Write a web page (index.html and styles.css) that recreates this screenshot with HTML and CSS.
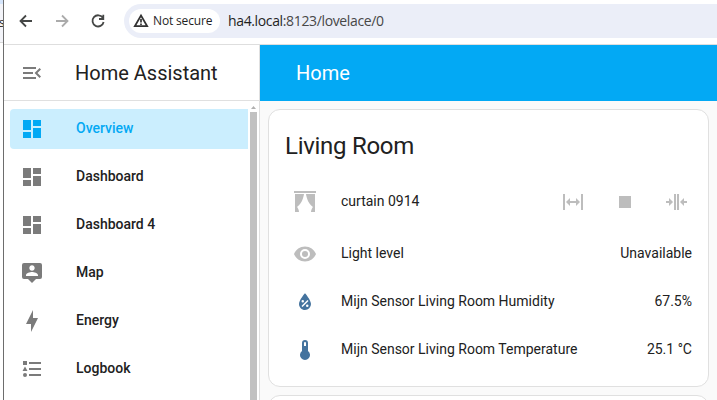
FILE: index.html
```html
<!DOCTYPE html>
<html lang="en">
<head>
<meta charset="utf-8">
<title>Home – Home Assistant</title>
<link rel="stylesheet" href="styles.css">
</head>
<body>
<div class="desktop">
  <div class="behind"><span class="behind-text">s</span></div>
  <div class="window">
    <div class="toolbar">
      <svg class="nav-icon" viewBox="0 0 16 16"><path d="M14 8H3M8 2.5L2.5 8L8 13.5"/></svg>
      <svg class="nav-icon disabled" viewBox="0 0 16 16"><path d="M2 8H13M8 2.5L13.500 8L8 13.500"/></svg>
      <svg class="nav-icon" viewBox="0 0 16 16"><path d="M12.800 4.800A5.600 5.600 0 1 0 13.600 9M13.300 1.800V6H9"/></svg>
      <div class="address">
        <div class="chip">
          <svg class="warn" viewBox="0 0 16 16"><path d="M8 2.500L14.200 13.200H1.800Z"/><path d="M8 6V9.600M8 10.600V12"/></svg>
          <span class="chip-text">Not secure</span>
        </div>
        <span class="url"><span class="host">ha4.local</span>:8123/lovelace/0</span>
      </div>
    </div>
    <div class="app">
      <aside class="sidebar">
        <div class="side-head">
          <svg class="icon" viewBox="0 0 24 24"><path d="M21,15.61L19.59,17L14.58,12L19.59,7L21,8.39L17.44,12L21,15.61M3,6H16V8H3V6M3,13V11H13V13H3M3,18V16H16V18H3Z"/></svg>
          <span class="side-title">Home Assistant</span>
        </div>
        <div class="side-body">
          <nav class="menu">
            <a class="item active"><svg class="icon" viewBox="0 0 24 24"><path d="M13,3V9H21V3M13,21H21V11H13M3,21H11V15H3M3,13H11V3H3V13Z"/></svg>Overview</a>
            <a class="item"><svg class="icon" viewBox="0 0 24 24"><path d="M13,3V9H21V3M13,21H21V11H13M3,21H11V15H3M3,13H11V3H3V13Z"/></svg>Dashboard</a>
            <a class="item"><svg class="icon" viewBox="0 0 24 24"><path d="M13,3V9H21V3M13,21H21V11H13M3,21H11V15H3M3,13H11V3H3V13Z"/></svg>Dashboard 4</a>
            <a class="item"><svg class="icon" viewBox="0 0 24 24"><path d="M20,2H4A2,2 0 0,0 2,4V16A2,2 0 0,0 4,18H8L12,22L16,18H20A2,2 0 0,0 22,16V4A2,2 0 0,0 20,2M12,4.3C13.5,4.3 14.7,5.5 14.7,7C14.7,8.5 13.5,9.7 12,9.7C10.5,9.7 9.3,8.5 9.3,7C9.3,5.5 10.5,4.3 12,4.3M18,15H6V14.1C6,12.1 10,11 12,11C14,11 18,12.1 18,14.1V15Z"/></svg>Map</a>
            <a class="item"><svg class="icon" viewBox="0 0 24 24"><path d="M11 15H6L13 1V9H18L11 23V15Z"/></svg>Energy</a>
            <a class="item"><svg class="icon" viewBox="0 0 24 24"><path d="M5,9.5L7.5,14H2.5L5,9.5M3,4H7V8H3V4M5,20A2,2 0 0,0 7,18A2,2 0 0,0 5,16A2,2 0 0,0 3,18A2,2 0 0,0 5,20M9,5V7H21V5H9M9,19H21V17H9V19M9,11V13H21V11H9Z"/></svg>Logbook</a>
          </nav>
          <div class="scrollbar">
            <svg class="scroll-up" viewBox="0 0 5 3"><path d="M2.500 0L5 3H0Z"/></svg>
            <div class="thumb"></div>
          </div>
        </div>
      </aside>
      <main class="main">
        <header class="header">Home</header>
        <div class="view">
          <section class="card">
            <h1 class="card-title">Living Room</h1>
            <div class="row tall">
              <svg class="icon unavailable" viewBox="0 0 24 24"><path d="M23 3H1V1H23V3M2 22H6C6 19 4 17 4 17C10 13 11 4 11 4H2V22M22 4H13C13 4 14 13 20 17C20 17 18 19 18 22H22V4Z"/></svg>
              <span class="name">curtain 0914</span>
              <div class="controls">
                <svg class="icon unavailable" viewBox="0 0 24 24"><path d="M9,11H15V8L19,12L15,16V13H9V16L5,12L9,8V11M2,20V4H4V20H2M20,20V4H22V20H20Z"/></svg>
                <svg class="icon unavailable" viewBox="0 0 24 24"><path d="M18,18H6V6H18V18Z"/></svg>
                <svg class="icon unavailable" viewBox="0 0 24 24"><path d="M13,20V4H15.03V20H13M10,20V4H12.03V20H10M5,8L9.03,12L5,16V13H2V11H5V8M20,16L16,12L20,8V11H23V13H20V16Z"/></svg>
              </div>
            </div>
            <div class="row">
              <svg class="icon unavailable" viewBox="0 0 24 24"><path d="M12,9A3,3 0 0,0 9,12A3,3 0 0,0 12,15A3,3 0 0,0 15,12A3,3 0 0,0 12,9M12,17A5,5 0 0,1 7,12A5,5 0 0,1 12,7A5,5 0 0,1 17,12A5,5 0 0,1 12,17M12,4.5C7,4.5 2.73,7.61 1,12C2.73,16.39 7,19.5 12,19.5C17,19.5 21.27,16.39 23,12C21.27,7.61 17,4.5 12,4.5Z"/></svg>
              <span class="name">Light level</span>
              <span class="state">Unavailable</span>
            </div>
            <div class="row">
              <svg class="icon sensor" viewBox="0 0 24 24"><path d="M12,3.25C12,3.25 6,10 6,14C6,17.32 8.69,20 12,20A6,6 0 0,0 18,14C18,10 12,3.25 12,3.25M14.47,9.97L15.53,11.03L9.53,17.03L8.47,15.97M9.75,10A1.25,1.25 0 0,1 11,11.25A1.25,1.25 0 0,1 9.75,12.5A1.25,1.25 0 0,1 8.5,11.25A1.25,1.25 0 0,1 9.75,10M14.25,14.5A1.25,1.25 0 0,1 15.5,15.75A1.25,1.25 0 0,1 14.25,17A1.25,1.25 0 0,1 13,15.75A1.25,1.25 0 0,1 14.25,14.5Z"/></svg>
              <span class="name">Mijn Sensor Living Room Humidity</span>
              <span class="state">67.5%</span>
            </div>
            <div class="row">
              <svg class="icon sensor" viewBox="0 0 24 24"><path d="M15 13V5A3 3 0 0 0 9 5V13A5 5 0 1 0 15 13M12 4A1 1 0 0 1 13 5V8H11V5A1 1 0 0 1 12 4Z"/></svg>
              <span class="name">Mijn Sensor Living Room Temperature</span>
              <span class="state">25.1 °C</span>
            </div>
          </section>
          <section class="card next"></section>
        </div>
      </main>
    </div>
  </div>
</div>
</body>
</html>
```
FILE: styles.css
```css
* { box-sizing: border-box; }
body {
  margin: 0;
  overflow: hidden;
  font-family: Roboto, sans-serif;
  font-size: 14px;
  color: #212121;
}
.desktop { display: flex; width: 717px; height: 400px; }
.behind {
  width: 3px;
  height: 400px;
  overflow: hidden;
  padding-top: 14px;
  background: linear-gradient(#d5e5fb 0 4px, #f3f4f9 4px 42px, #d8d8d8 42px 43px, #fff 43px);
}
.behind-text { display: block; margin-left: -1px; font: 12px/18px "Open Sans", sans-serif; }
.window {
  width: 714px;
  border-left: 1px solid #6d6d6d;
  display: flex;
  flex-direction: column;
  background: #fff;
}
.toolbar {
  height: 45px;
  flex: none;
  display: flex;
  align-items: center;
  padding: 0 0 3px 14px;
  border-bottom: 1px solid #dedede;
}
.nav-icon {
  width: 16px;
  height: 16px;
  flex: none;
  margin-right: 20px;
  fill: none;
  stroke: #454746;
  stroke-width: 1.8;
}
.nav-icon.disabled { stroke: #ababab; }
.address {
  flex: 1;
  height: 34px;
  display: flex;
  align-items: center;
  margin-left: -2px;
  padding-left: 5px;
  border-radius: 17px 0 0 17px;
  background: #ebeef8;
}
.chip {
  width: 91px;
  height: 24px;
  display: flex;
  align-items: center;
  padding-left: 4px;
  border-radius: 12px;
  background: #fff;
}
.warn { width: 16px; height: 16px; flex: none; margin-right: 4px; fill: none; stroke: #333; stroke-width: 1.7; }
.chip-text { font: 12px/20px "Open Sans", sans-serif; letter-spacing: -0.15px; white-space: nowrap; color: #1f1f1f; }
.url { margin-left: 8px; font: 14px/20px "Open Sans", sans-serif; letter-spacing: -0.36px; color: #474747; white-space: nowrap; }
.host { color: #1f1f1f; }
.app { flex: 1; display: flex; min-height: 0; }
.sidebar { width: 256px; flex: none; border-right: 1px solid #e0e0e0; }
.side-head {
  height: 56px;
  display: flex;
  align-items: center;
  padding-left: 16px;
  border-bottom: 1px solid #e0e0e0;
}
.side-title { margin-left: 31px; font-size: 20px; }
.icon { width: 24px; height: 24px; flex: none; fill: #7b7b7b; }
.side-body { display: flex; height: 299px; overflow: hidden; }
.menu {
  width: 238px;
  margin-left: 6px;
  padding-top: 8px;
  display: flex;
  flex-direction: column;
  gap: 8px;
}
.item {
  height: 40px;
  flex: none;
  display: flex;
  align-items: center;
  gap: 32px;
  padding: 0 0 2px 10px;
  border-radius: 4px 0 0 4px;
  font-weight: 500;
}
.item .icon, .row .icon { position: relative; top: 1px; }
.item.active { background: #cbeefe; color: #03a9f4; }
.item.active .icon { fill: #03a9f4; }
.scrollbar { width: 7px; margin-left: 2px; padding-top: 5px; }
.scroll-up { display: block; width: 5px; height: 3px; margin: 0 1px 3px; fill: #b0b0b0; }
.thumb { height: 300px; background: #c1c1c1; }
.main { flex: 1; background: #fafafa; }
.header {
  height: 56px;
  padding-left: 36px;
  background: #03a9f4;
  color: #fff;
  font-size: 20px;
  line-height: 56px;
}
.view {
  height: 299px;
  overflow: hidden;
  display: flex;
  flex-direction: column;
  gap: 8px;
  padding: 8px 8px 0;
}
.card {
  height: 278px;
  flex: none;
  display: flex;
  flex-direction: column;
  gap: 8px;
  border: 1px solid #e0e0e0;
  border-radius: 12px;
  background: #fff;
  padding: 0 16px;
}
.card-title {
  height: 59px;
  margin: 0;
  padding-top: 12px;
  font-size: 24px;
  font-weight: 400;
  line-height: 48px;
  letter-spacing: -0.012em;
}
.row { height: 40px; flex: none; display: flex; align-items: center; padding-left: 8px; }
.row.tall { height: 48px; }
.name { flex: 1; margin-left: 24px; white-space: nowrap; }
.controls { display: flex; gap: 28px; margin-right: 3px; }
.controls .icon:last-child { margin-left: -1px; margin-right: 1px; }
.unavailable { fill: #bdbdbd; }
.sensor { fill: #44739e; }
```
